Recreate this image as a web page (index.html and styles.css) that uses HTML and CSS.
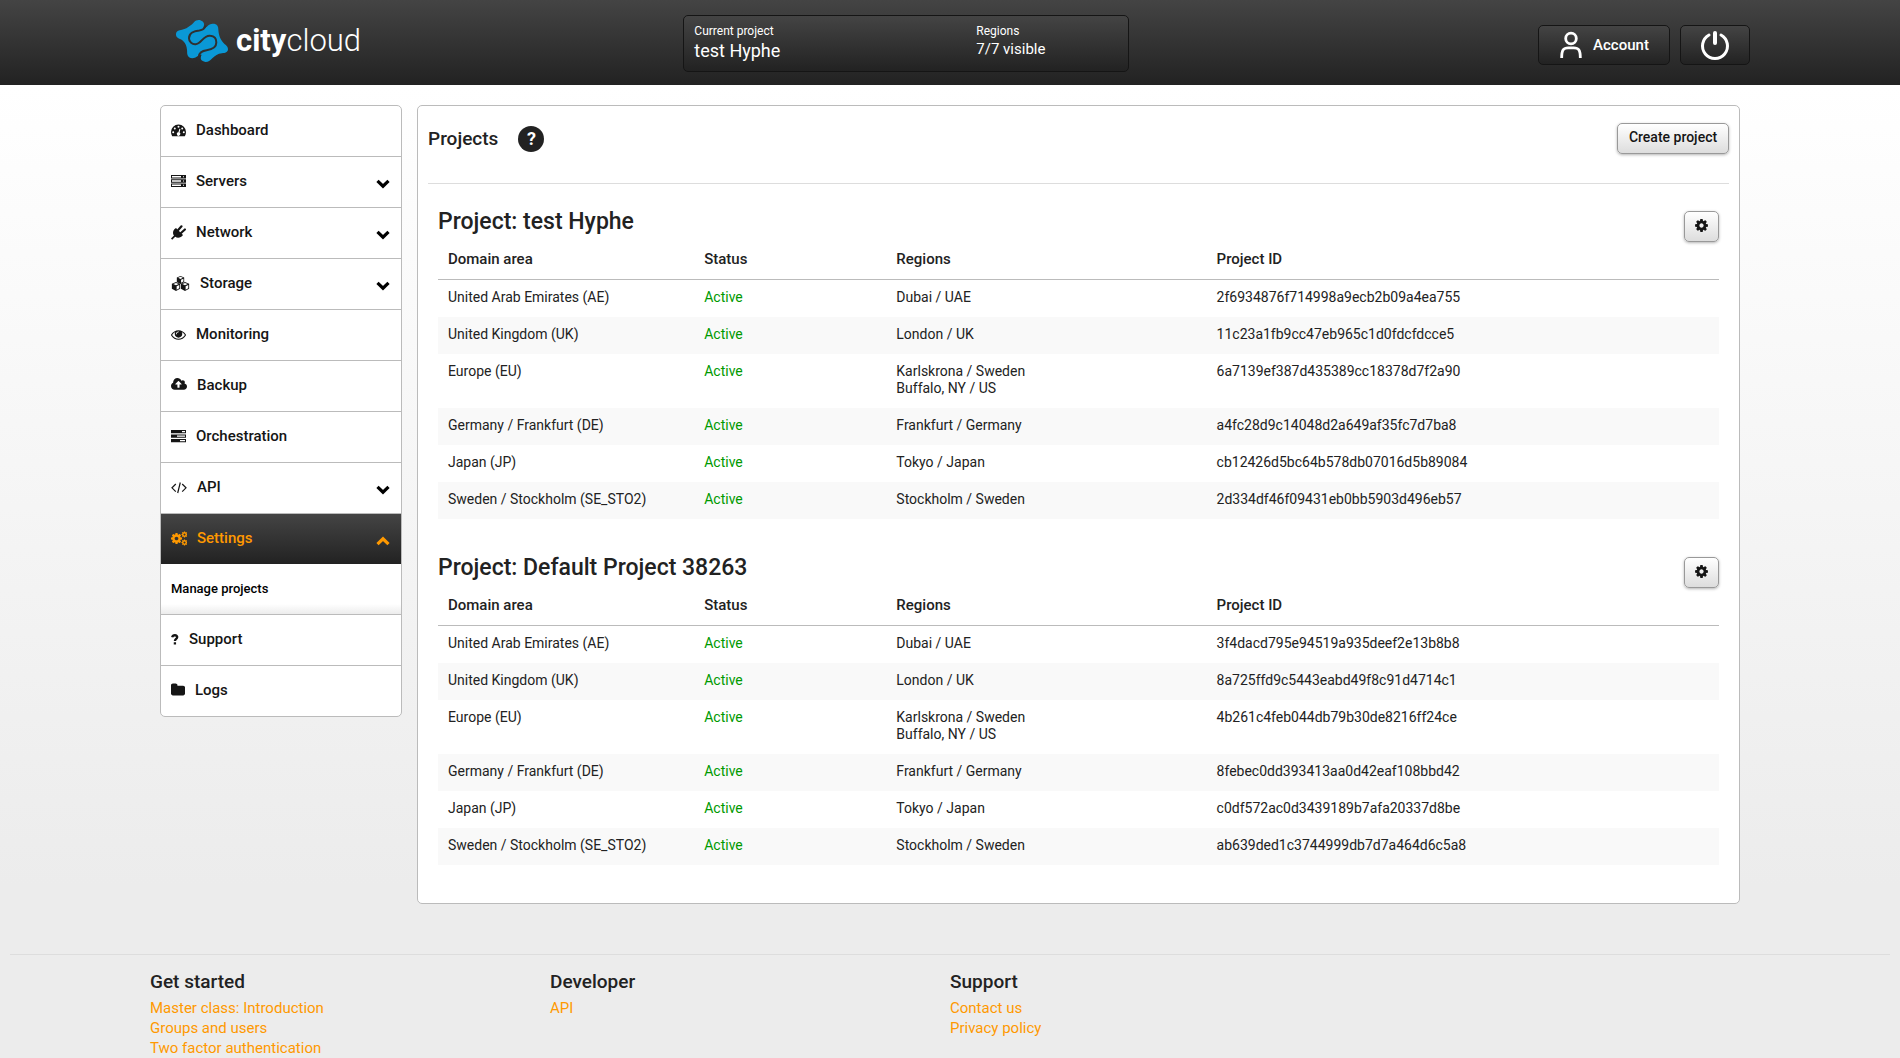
FILE: index.html
```html
<!DOCTYPE html>
<html lang="en">
<head>
<meta charset="utf-8">
<title>Projects - City Cloud</title>
<meta name="viewport" content="width=device-width, initial-scale=1">
<link rel="stylesheet" href="styles.css">
</head>
<body>
<svg class="sprite" aria-hidden="true">
  <symbol id="chevron" viewBox="0 0 14 10"><path d="M1.500 1.800L7 7.200l5.500-5.400" fill="none" stroke="currentColor" stroke-width="3.200"/></symbol>
  <symbol id="gear" viewBox="0 0 1792 1792"><path fill="currentColor" d="M1152 896q0-106-75-181t-181-75-181 75-75 181 75 181 181 75 181-75 75-181zm512-109v222q0 12-8 23t-20 13l-185 28q-19 54-39 91 35 50 107 138 10 12 10 25t-9 23q-27 37-99 108t-94 71q-12 0-26-9l-138-108q-44 23-91 38-16 136-29 186-7 28-36 28h-222q-14 0-24.500-8.500t-11.500-21.500l-28-184q-49-16-90-37l-141 107q-10 9-25 9-14 0-25-11-126-114-165-168-7-10-7-23 0-12 8-23 15-21 51-66.500t54-70.500q-27-50-41-99l-183-27q-13-2-21-12.500t-8-23.500v-222q0-12 8-23t19-13l186-28q14-46 39-92-40-57-107-138-10-12-10-24 0-10 9-23 26-36 98.500-107.500t94.500-71.500q13 0 26 10l138 107q44-23 91-38 16-136 29-186 7-28 36-28h222q14 0 24.500 8.500t11.500 21.500l28 184q49 16 90 37l142-107q9-9 24-9 13 0 25 10 129 119 165 170 7 8 7 22 0 12-8 23-15 21-51 66.500t-54 70.500q26 50 41 98l183 28q13 2 21 12.500t8 23.500z"/></symbol>
  <symbol id="cube" viewBox="0 0 10 10"><path fill="currentColor" fill-rule="evenodd" d="M5 0l4.600 1.900v5.600L5 10 .4 7.500V1.900zM5 1L2 2.300l3 1.300 3-1.300zM5.700 4.700v3.800l2.900-1.600V3.400z"/></symbol>
</svg>

<header class="topbar">
  <div class="container topbar-inner">
    <a class="logo" href="#" aria-label="citycloud">
      <svg class="logo-mark" viewBox="0 0 156 128" aria-hidden="true">
        <path fill="#0a98d6" d="M54 9C60 1 73 0 80 7c6 6 5 13 1 19 5 1 9-1 13-5 5-6 13-9 21-7 9 2 12 9 12 17 1 17 5 27 15 40 5 6 14 10 14 19 0 9-9 11-18 12-13 1-21 7-29 15-9 9-19 16-30 8-7-5-5-12-2-18-6-2-10 2-14 5-7 6-17 7-24 2-7-6-5-14-6-22-1-11-4-19-11-26C15 58 0 59 0 46c0-10 9-13 18-14 10-2 17-6 24-12 5-3 8-7 12-11z"/>
        <path fill="none" stroke="#303030" stroke-width="6" d="M89 19C86 29 79 33 70 34 54 35 39 42 39 57c0 12 10 19 20 18 17 0 23-28 44-25 13 1 18 10 18 20 0 16-14 21-29 23-14 2-22 6-23 18"/>
      </svg>
      <span class="logo-text"><b>city</b>cloud</span>
    </a>
    <div class="context">
      <div class="context-project"><span class="context-label">Current project</span><span class="context-name">test Hyphe</span></div>
      <div class="context-regions"><span class="context-label">Regions</span><span class="context-value">7/7 visible</span></div>
    </div>
    <div class="actions">
      <button class="dark-button account" type="button">
        <svg class="icon-user" viewBox="0 0 24 30" fill="none" stroke="#fff" stroke-width="3" aria-hidden="true"><circle cx="12" cy="8" r="5.700"/><path d="M2 29C2 20 4 18 9 18h6c5 0 7 2 7 11"/></svg>
        <span>Account</span>
      </button>
      <button class="dark-button power" type="button" aria-label="Log out">
        <svg class="icon-power" viewBox="0 0 30 30" fill="none" stroke="#fff" stroke-width="3" stroke-linecap="round" aria-hidden="true"><path d="M9 5a12.500 12.500 0 1 0 12 0"/><path stroke-width="4" d="M15 3v10"/></svg>
      </button>
    </div>
  </div>
</header>

<div class="container layout">
  <nav class="sidebar" aria-label="Main">
    <ul class="menu">
      <li><a class="menu-link" href="#"><svg class="icon" viewBox="0 0 15 15" aria-hidden="true"><path fill="currentColor" fill-rule="evenodd" d="M7.500 1.500A7.500 7.500 0 0 1 15 9c0 1.500-.4 3-1.200 4.200H1.200A8 8 0 0 1 0 9a7.500 7.500 0 0 1 7.500-7.500zM2.200 8.200a1 1 0 1 0 0 2 1 1 0 0 0 0-2zM3.800 4.400a1 1 0 1 0 0 2 1 1 0 0 0 0-2zM7.500 2.800a1 1 0 1 0 0 2 1 1 0 0 0 0-2zM11.200 4.400a1 1 0 1 0 0 2 1 1 0 0 0 0-2zM12.800 8.200a1 1 0 1 0 0 2 1 1 0 0 0 0-2zM8.400 5.800l-1 3.500a1.700 1.700 0 1 0 1.200.3l.8-3.500z"/></svg>Dashboard</a></li>
      <li><a class="menu-link" href="#"><svg class="icon" viewBox="0 0 15 15" aria-hidden="true"><path fill="currentColor" fill-rule="evenodd" d="M0 1h15v3.500H0zM0 5.300h15v3.500H0zM0 9.600h15v3.500H0zM1 2v1.500h9v-1.500zM1 6.300v1.500h9v-1.500zM1 10.600v1.500h9v-1.500zM12 2.200v1h1v-1zM12 6.500v1h1v-1zM12 10.800v1h1v-1z"/></svg>Servers<svg class="chevron" aria-hidden="true"><use href="#chevron"/></svg></a></li>
      <li><a class="menu-link" href="#"><svg class="icon" viewBox="0 0 15 15" aria-hidden="true"><path fill="currentColor" d="M5 3l7 7c-2 3-5.500 3.500-7.800 1.800L1.200 14.800l-1.200-1.200L3 10.600C1.200 8.200 2 4.800 5 3z"/><path stroke="currentColor" stroke-width="2.200" stroke-linecap="round" d="M7.200 5L10.500 1.300M10 8L13.900 4.500"/></svg>Network<svg class="chevron" aria-hidden="true"><use href="#chevron"/></svg></a></li>
      <li><a class="menu-link" href="#"><svg class="icon icon-wide" viewBox="0 0 19 15" aria-hidden="true"><use href="#cube" x="4" y="0" width="11" height="8"/><use href="#cube" x="0" y="6" width="10" height="9"/><use href="#cube" x="9" y="6" width="10" height="9"/></svg>Storage<svg class="chevron" aria-hidden="true"><use href="#chevron"/></svg></a></li>
      <li><a class="menu-link" href="#"><svg class="icon" viewBox="0 0 1792 1792" aria-hidden="true"><path fill="currentColor" d="M1664 960q-152-236-381-353 61 104 61 225 0 185-131.500 316.500t-316.500 131.500-316.500-131.500-131.500-316.500q0-121 61-225-229 117-381 353 133 205 333.500 326.500t434.500 121.500 434.500-121.500 333.500-326.500zm-720-384q0-20-14-34t-34-14q-125 0-214.500 89.500t-89.500 214.500q0 20 14 34t34 14 34-14 14-34q0-86 61-147t147-61q20 0 34-14t14-34zm848 384q0 34-20 69-140 230-376.500 368.500t-499.500 138.500-499.500-139-376.500-368q-20-35-20-69t20-69q140-229 376.500-368t499.500-139 499.500 139 376.500 368q20 35 20 69z"/></svg>Monitoring</a></li>
      <li><a class="menu-link" href="#"><svg class="icon icon-mid" viewBox="0 128 1920 1792" aria-hidden="true"><path fill="currentColor" d="M1280 864q0-14-9-23l-352-352q-9-9-23-9t-23 9l-351 351q-10 12-10 24 0 14 9 23t23 9h224v352q0 13 9.500 22.500t22.500 9.500h192q13 0 22.500-9.500t9.500-22.500v-352h224q13 0 22.500-9.500t9.500-22.500zm640 288q0 159-112.500 271.500t-271.500 112.500h-1088q-185 0-316.500-131.500t-131.500-316.500q0-130 70-240t188-165q-2-30-2-43 0-212 150-362t362-150q156 0 285.500 87t188.500 231q71-62 166-62 106 0 181 75t75 181q0 76-41 138 130 31 213.500 135.500t83.500 238.500z"/></svg>Backup</a></li>
      <li><a class="menu-link" href="#"><svg class="icon" viewBox="0 0 15 15" aria-hidden="true"><path fill="currentColor" fill-rule="evenodd" d="M0 1h15v3.300H0zM0 5.500h15v3.300H0zM0 10h15v3.300H0zM11 2v1.300h3v-1.300zM6 6.500v1.300h8v-1.300zM9 11v1.300h5v-1.300z"/></svg>Orchestration</a></li>
      <li><a class="menu-link" href="#"><svg class="icon icon-mid" viewBox="0 0 16 15" fill="none" stroke="currentColor" stroke-width="1.200" aria-hidden="true"><path d="M4.800 4L1 7.800l3.800 3.800M11.200 4L15 7.800l-3.800 3.800M9.300 2.500L6.700 13"/></svg>API<svg class="chevron" aria-hidden="true"><use href="#chevron"/></svg></a></li>
      <li>
        <a class="menu-link active" href="#" aria-expanded="true"><svg class="icon icon-mid" viewBox="0 0 16 15" aria-hidden="true"><use href="#gear" x="-1" y="1" width="13" height="13"/><use href="#gear" x="10" y="0" width="7" height="7"/><use href="#gear" x="10" y="8" width="7" height="7"/></svg>Settings<svg class="chevron up" aria-hidden="true"><use href="#chevron"/></svg></a>
        <a class="menu-link sub" href="#">Manage projects</a>
      </li>
      <li><a class="menu-link" href="#"><svg class="icon icon-thin" viewBox="0 0 9 15" aria-hidden="true"><path fill="none" stroke="currentColor" stroke-width="2.600" d="M1.300 5C1.800 3 3 2.700 4.400 2.700 6.200 2.700 7 3.600 7 4.800 7 6.800 4.400 7 4.400 9.200M4.400 10.700v2.500"/></svg>Support</a></li>
      <li><a class="menu-link" href="#"><svg class="icon icon-folder" viewBox="64 64 1664 1664" aria-hidden="true"><path fill="currentColor" d="M1728 608v704q0 92-66 158t-158 66h-1216q-92 0-158-66t-66-158v-960q0-92 66-158t158-66h320q92 0 158 66t66 158v32h672q92 0 158 66t66 158z"/></svg>Logs</a></li>
    </ul>
  </nav>

  <main class="panel">
    <div class="panel-head">
      <h1>Projects</h1>
      <button class="help" type="button" aria-label="Help">?</button>
      <button class="button create" type="button">Create project</button>
    </div>

    <section class="project">
      <div class="project-head"><h2>Project: test Hyphe</h2><button class="button gear" type="button" aria-label="Project settings"><svg aria-hidden="true"><use href="#gear"/></svg></button></div>
      <table>
        <thead><tr><th class="col-domain">Domain area</th><th class="col-status">Status</th><th class="col-regions">Regions</th><th>Project ID</th></tr></thead>
        <tbody>
          <tr><td>United Arab Emirates (AE)</td><td class="ok">Active</td><td>Dubai / UAE</td><td>2f6934876f714998a9ecb2b09a4ea755</td></tr>
          <tr><td>United Kingdom (UK)</td><td class="ok">Active</td><td>London / UK</td><td>11c23a1fb9cc47eb965c1d0fdcfdcce5</td></tr>
          <tr><td>Europe (EU)</td><td class="ok">Active</td><td>Karlskrona / Sweden<br>Buffalo, NY / US</td><td>6a7139ef387d435389cc18378d7f2a90</td></tr>
          <tr><td>Germany / Frankfurt (DE)</td><td class="ok">Active</td><td>Frankfurt / Germany</td><td>a4fc28d9c14048d2a649af35fc7d7ba8</td></tr>
          <tr><td>Japan (JP)</td><td class="ok">Active</td><td>Tokyo / Japan</td><td>cb12426d5bc64b578db07016d5b89084</td></tr>
          <tr><td>Sweden / Stockholm (SE_STO2)</td><td class="ok">Active</td><td>Stockholm / Sweden</td><td>2d334df46f09431eb0bb5903d496eb57</td></tr>
        </tbody>
      </table>
    </section>

    <section class="project">
      <div class="project-head"><h2>Project: Default Project 38263</h2><button class="button gear" type="button" aria-label="Project settings"><svg aria-hidden="true"><use href="#gear"/></svg></button></div>
      <table>
        <thead><tr><th class="col-domain">Domain area</th><th class="col-status">Status</th><th class="col-regions">Regions</th><th>Project ID</th></tr></thead>
        <tbody>
          <tr><td>United Arab Emirates (AE)</td><td class="ok">Active</td><td>Dubai / UAE</td><td>3f4dacd795e94519a935deef2e13b8b8</td></tr>
          <tr><td>United Kingdom (UK)</td><td class="ok">Active</td><td>London / UK</td><td>8a725ffd9c5443eabd49f8c91d4714c1</td></tr>
          <tr><td>Europe (EU)</td><td class="ok">Active</td><td>Karlskrona / Sweden<br>Buffalo, NY / US</td><td>4b261c4feb044db79b30de8216ff24ce</td></tr>
          <tr><td>Germany / Frankfurt (DE)</td><td class="ok">Active</td><td>Frankfurt / Germany</td><td>8febec0dd393413aa0d42eaf108bbd42</td></tr>
          <tr><td>Japan (JP)</td><td class="ok">Active</td><td>Tokyo / Japan</td><td>c0df572ac0d3439189b7afa20337d8be</td></tr>
          <tr><td>Sweden / Stockholm (SE_STO2)</td><td class="ok">Active</td><td>Stockholm / Sweden</td><td>ab639ded1c3744999db7d7a464d6c5a8</td></tr>
        </tbody>
      </table>
    </section>
  </main>
</div>

<footer class="footer">
  <div class="footer-columns">
    <div><h3>Get started</h3><a href="#">Master class: Introduction</a><a href="#">Groups and users</a><a href="#">Two factor authentication</a></div>
    <div><h3>Developer</h3><a href="#">API</a></div>
    <div><h3>Support</h3><a href="#">Contact us</a><a href="#">Privacy policy</a></div>
  </div>
</footer>
</body>
</html>
```
FILE: styles.css
```css
*, *::before, *::after { box-sizing: border-box; }
body {
  margin: 0;
  background: #ececec linear-gradient(#fff, #ececec) 0 85px / 100% 800px no-repeat;
  color: #222;
  font: 14px/17px Roboto, "Liberation Sans", sans-serif;
}
h1, h2, h3, ul { margin: 0; padding: 0; font-weight: 500; }
button { font: inherit; color: inherit; cursor: pointer; }
a { text-decoration: none; }
svg { display: block; }
.sprite { position: absolute; width: 0; height: 0; }
.container { max-width: 1600px; margin: 0 auto; }

/* Top bar */
.topbar { background: linear-gradient(#444, #222); color: #fff; }
.topbar-inner { display: grid; grid-template-columns: repeat(3, 1fr); height: 85px; align-items: start; }
.logo { display: flex; align-items: center; gap: 8px; padding: 19px 0 0 26px; color: #fff; }
.logo-mark { width: 52px; height: 43px; }
.logo-text { font-size: 31px; line-height: 40px; font-weight: 300; }
.logo-text b { font-weight: 700; }
.context {
  display: grid; grid-template-columns: 282px 1fr; max-width: 446px; height: 57px; margin-top: 15px; padding: 7px 10px;
  border: 1px solid #151515; border-radius: 5px; background: linear-gradient(#444, #222);
}
.context-project, .context-regions { display: flex; flex-direction: column; }
.context-label { font-size: 12px; line-height: 16px; }
.context-name { font-size: 18px; line-height: 24px; }
.context-value { font-size: 15px; line-height: 20px; }
.actions { display: flex; justify-content: flex-end; gap: 10px; padding-top: 25px; }
.dark-button {
  display: flex; align-items: center; justify-content: center; height: 40px; padding: 0;
  border: 1px solid #151515; border-radius: 5px; background: linear-gradient(#444, #222); color: #fff;
}
.account { width: 132px; gap: 10px; font-size: 15px; font-weight: 500; }
.power { width: 70px; }
.icon-user { width: 24px; height: 28px; }
.icon-power { width: 30px; height: 30px; }

/* Layout */
.layout { display: flex; align-items: flex-start; gap: 15px; padding: 20px 10px 0; }
.sidebar, .panel { border: 1px solid #bbb; border-radius: 5px; background: #fff; }
.sidebar { flex: 0 0 242px; overflow: hidden; }
.panel { flex: 1; min-width: 0; padding: 17px 10px 38px; }

/* Sidebar menu */
.menu { list-style: none; }
.menu li + li { border-top: 1px solid #bbb; }
.menu-link { display: flex; align-items: center; gap: 10px; height: 50px; padding: 0 10px 2px; color: #151515; font-size: 15px; font-weight: 500; }
.icon { width: 15px; height: 15px; flex: none; }
.icon-wide { width: 19px; }
.icon-mid { width: 16px; }
.icon-thin { width: 8px; }
.icon-folder { width: 14px; height: 14px; }
.chevron { width: 14px; height: 10px; margin: 5px 1px 0 auto; color: #000; }
.chevron.up { color: #f90; transform: rotate(180deg); }
.active { background: linear-gradient(#444, #222); color: #f90; }
.sub { color: #000; font-size: 13px; background: linear-gradient(#fff 80%, #ececec); }

/* Panel */
.panel-head { display: flex; align-items: flex-start; height: 61px; border-bottom: 1px solid #ddd; }
h1 { font-size: 19px; line-height: 32px; }
.help {
  width: 26px; height: 26px; margin: 3px 0 0 20px; padding: 0; border: 0; border-radius: 50%;
  background: #222; color: #fff; font-size: 18px; line-height: 26px; font-weight: 700; text-align: center;
}
.button {
  height: 31px; padding: 0 9px 2px; border: 1px solid #999; border-radius: 5px;
  background: linear-gradient(#fff, #ddd); color: #151515; box-shadow: 0 1px 3px rgba(0, 0, 0, .3);
}
.create { margin-left: auto; width: 112px; padding: 0 0 2px; font-size: 14px; font-weight: 500; }
.gear { width: 35px; padding: 0 9px 2px; }
.gear svg { width: 15px; height: 15px; }
.project { padding: 20px 10px 0; }
.project + .project { padding-top: 31px; }
.project-head { display: flex; justify-content: space-between; align-items: flex-end; height: 38px; }
h2 { font-size: 23px; line-height: 40px; }

table { width: 100%; border-collapse: collapse; table-layout: fixed; }
.col-domain { width: 20%; }
.col-status { width: 15%; }
.col-regions { width: 25%; }
th { padding: 9px 10px 11px; border-bottom: 1px solid #bbb; font-size: 15px; font-weight: 500; text-align: left; }
td { padding: 9px 10px 11px; vertical-align: top; }
tbody tr:nth-child(even) { background: #f9f9f9; }
.ok { color: #090; }

/* Footer */
.footer { margin: 50px 10px 0; border-top: 1px solid #ddd; }
.footer-columns { display: grid; grid-template-columns: repeat(4, 1fr); max-width: 1600px; margin: 0 auto; padding-top: 15px; }
h3 { font-size: 19px; line-height: 24px; margin-bottom: 4px; }
.footer a { display: block; color: #f90; font-size: 15px; line-height: 20px; }
```
